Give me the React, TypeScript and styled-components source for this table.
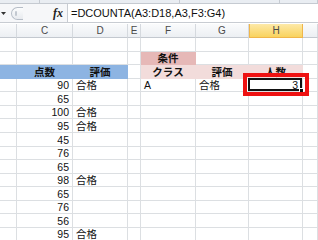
import React from 'react';
import styled, { createGlobalStyle } from 'styled-components';

const GlobalStyle = createGlobalStyle`
  html, body {
    margin: 0;
    padding: 0;
    background: #ffffff;
    overflow: hidden;
  }
  * {
    box-sizing: border-box;
  }
`;

const GRID = '#dcdfe2';
const BLUE = '#8db4e2';
const PINK = '#e6b8b7';
const LIGHT_PINK = '#f2dcdb';

const COLUMNS = ['', 'C', 'D', 'E', 'F', 'G', 'H', ''];
const WIDTHS = '17px 56px 55px 13px 55px 53px 54px 15px';

type Align = 'left' | 'right' | 'center';

type CellSpec = {
  text?: string;
  align?: Align;
  bg?: string;
  bold?: boolean;
  selected?: boolean;
};

const blank: CellSpec = {};
const num = (text: string): CellSpec => ({ text, align: 'right' });
const pass: CellSpec = { text: '合格', align: 'left' };

const dataRow = (score: string, passed: boolean): CellSpec[] => [
  blank,
  num(score),
  passed ? pass : blank,
  blank,
  blank,
  blank,
  blank,
  blank,
];

const rows: CellSpec[][] = [
  [blank, blank, blank, blank, blank, blank, blank, blank],
  [blank, blank, blank, blank, { text: '条件', align: 'center', bg: PINK, bold: true }, blank, blank, blank],
  [
    { bg: BLUE },
    { text: '点数', align: 'center', bg: BLUE, bold: true },
    { text: '評価', align: 'center', bg: BLUE, bold: true },
    blank,
    { text: 'クラス', align: 'center', bg: LIGHT_PINK, bold: true },
    { text: '評価', align: 'center', bg: LIGHT_PINK, bold: true },
    { text: '人数', align: 'center', bg: LIGHT_PINK, bold: true },
    blank,
  ],
  [
    blank,
    num('90'),
    pass,
    blank,
    { text: 'A', align: 'left' },
    pass,
    { text: '3', align: 'right', selected: true },
    blank,
  ],
  dataRow('65', false),
  dataRow('100', true),
  dataRow('95', true),
  dataRow('45', false),
  dataRow('76', false),
  dataRow('65', false),
  dataRow('98', true),
  dataRow('65', false),
  dataRow('76', false),
  dataRow('56', false),
  dataRow('95', true),
];

const Window = styled.div`
  width: 318px;
  height: 240px;
  display: flex;
  flex-direction: column;
  overflow: hidden;
  font-family: 'Liberation Sans', 'Noto Sans CJK JP', sans-serif;
`;

const Ribbon = styled.div`
  height: 4px;
  flex-shrink: 0;
  display: flex;
  background: #e9edf2;
  border-bottom: 1px solid #c5cad1;
`;

const RibbonGroup = styled.div<{ $width: number }>`
  width: ${(p) => p.$width}px;
  flex-shrink: 0;
  border-right: 1px solid #c5cad1;
`;

const FormulaBar = styled.div`
  height: 19px;
  flex-shrink: 0;
  display: flex;
  align-items: center;
  background: #f6f7f9;
  border-bottom: 1px solid #c8ccd2;
`;

const NameBoxArrow = styled.div`
  width: 10px;
  display: flex;
  justify-content: flex-start;
  padding-left: 1px;
`;

const Grip = styled.div`
  width: 12px;
  height: 13px;
  margin-left: 1px;
  border: 1px solid #b6bdc7;
  border-right: none;
  border-radius: 7px 0 0 7px;
  background: linear-gradient(#fbfcfd, #e8ebef);
  display: flex;
  align-items: center;
  padding-left: 3px;
`;

const GripDot = styled.span`
  width: 2px;
  height: 5px;
  border-radius: 1px;
  background: #c2c8d0;
`;

const FxLabel = styled.span`
  margin-left: 30px;
  width: 13px;
  font-family: 'Liberation Serif', serif;
  font-style: italic;
  font-weight: bold;
  font-size: 12px;
  color: #222;
`;

const FormulaInput = styled.div`
  flex: 1;
  height: 100%;
  margin-left: 1px;
  background: #ffffff;
  border-left: 1px solid #c8ccd2;
  padding-left: 3px;
  display: flex;
  align-items: center;
  font-size: 11px;
  color: #111;
  white-space: nowrap;
`;

const Sheet = styled.div`
  margin-top: 1px;
  display: grid;
  grid-template-columns: ${WIDTHS};
  grid-template-rows: 14px;
  grid-auto-rows: 13.57px;
  flex-shrink: 0;
`;

const ColumnHeader = styled.div<{ $active?: boolean }>`
  display: flex;
  align-items: center;
  justify-content: center;
  font-size: 10px;
  color: #4a4a4a;
  background: ${(p) =>
    p.$active ? 'linear-gradient(#fde9a8, #f9d35e)' : 'linear-gradient(#fafbfc, #eceff3)'};
  border-right: 1px solid ${(p) => (p.$active ? '#f0b64a' : '#d5d9de')};
  border-left: ${(p) => (p.$active ? '1px solid #f0b64a' : 'none')};
  border-bottom: 1px solid ${(p) => (p.$active ? '#f0b64a' : '#c3c8cf')};
`;

const Cell = styled.div<{ $align: Align; $bg?: string; $bold?: boolean; $selected?: boolean }>`
  position: relative;
  display: flex;
  align-items: flex-end;
  justify-content: ${(p) =>
    p.$align === 'right' ? 'flex-end' : p.$align === 'center' ? 'center' : 'flex-start'};
  padding: 0 ${(p) => (p.$selected ? 4 : 3)}px 0 3px;
  background: ${(p) => p.$bg ?? '#ffffff'};
  border-right: 1px solid ${(p) => p.$bg ?? GRID};
  border-bottom: 1px solid ${(p) => p.$bg ?? GRID};
  font-size: 10.5px;
  line-height: 12px;
  font-weight: ${(p) => (p.$bold ? 'bold' : 'normal')};
  color: #111;
  white-space: nowrap;
  z-index: ${(p) => (p.$selected ? 2 : 'auto')};
`;

const SelectedFrame = styled.div`
  position: absolute;
  inset: -1px 0 0 -1px;
  border: 2px solid #111;
  pointer-events: none;
`;

const FillHandle = styled.div`
  position: absolute;
  right: -4px;
  bottom: -4px;
  width: 5px;
  height: 5px;
  background: #111;
  border: 1px solid #ffffff;
`;

const Callout = styled.div`
  position: absolute;
  left: -6px;
  top: -6px;
  right: -7px;
  bottom: -5px;
  border: 4px solid #ee1111;
  pointer-events: none;
`;

const CellText = styled.span`
  position: relative;
`;

const DropArrow = () => (
  <svg width="5" height="3" viewBox="0 0 5 3">
    <path d="M0 0 L5 0 L2.5 3 Z" fill="#333" />
  </svg>
);

export default function App() {
  return (
    <>
      <GlobalStyle />
      <Window>
        <Ribbon>
          <RibbonGroup $width={40} />
          <RibbonGroup $width={140} />
          <RibbonGroup $width={100} />
          <RibbonGroup $width={38} />
        </Ribbon>
        <FormulaBar>
          <NameBoxArrow>
            <DropArrow />
          </NameBoxArrow>
          <Grip>
            <GripDot />
          </Grip>
          <FxLabel>fx</FxLabel>
          <FormulaInput>=DCOUNTA(A3:D18,A3,F3:G4)</FormulaInput>
        </FormulaBar>
        <Sheet>
          {COLUMNS.map((name, i) => (
            <ColumnHeader key={`h${i}`} $active={name === 'H'}>
              {name}
            </ColumnHeader>
          ))}
          {rows.map((row, r) =>
            row.map((cell, c) => (
              <Cell
                key={`${r}-${c}`}
                $align={cell.align ?? 'left'}
                $bg={cell.bg}
                $bold={cell.bold}
                $selected={cell.selected}
              >
                {cell.selected && (
                  <>
                    <SelectedFrame>
                      <FillHandle />
                    </SelectedFrame>
                    <Callout />
                  </>
                )}
                {cell.text && <CellText>{cell.text}</CellText>}
              </Cell>
            ))
          )}
        </Sheet>
      </Window>
    </>
  );
}
